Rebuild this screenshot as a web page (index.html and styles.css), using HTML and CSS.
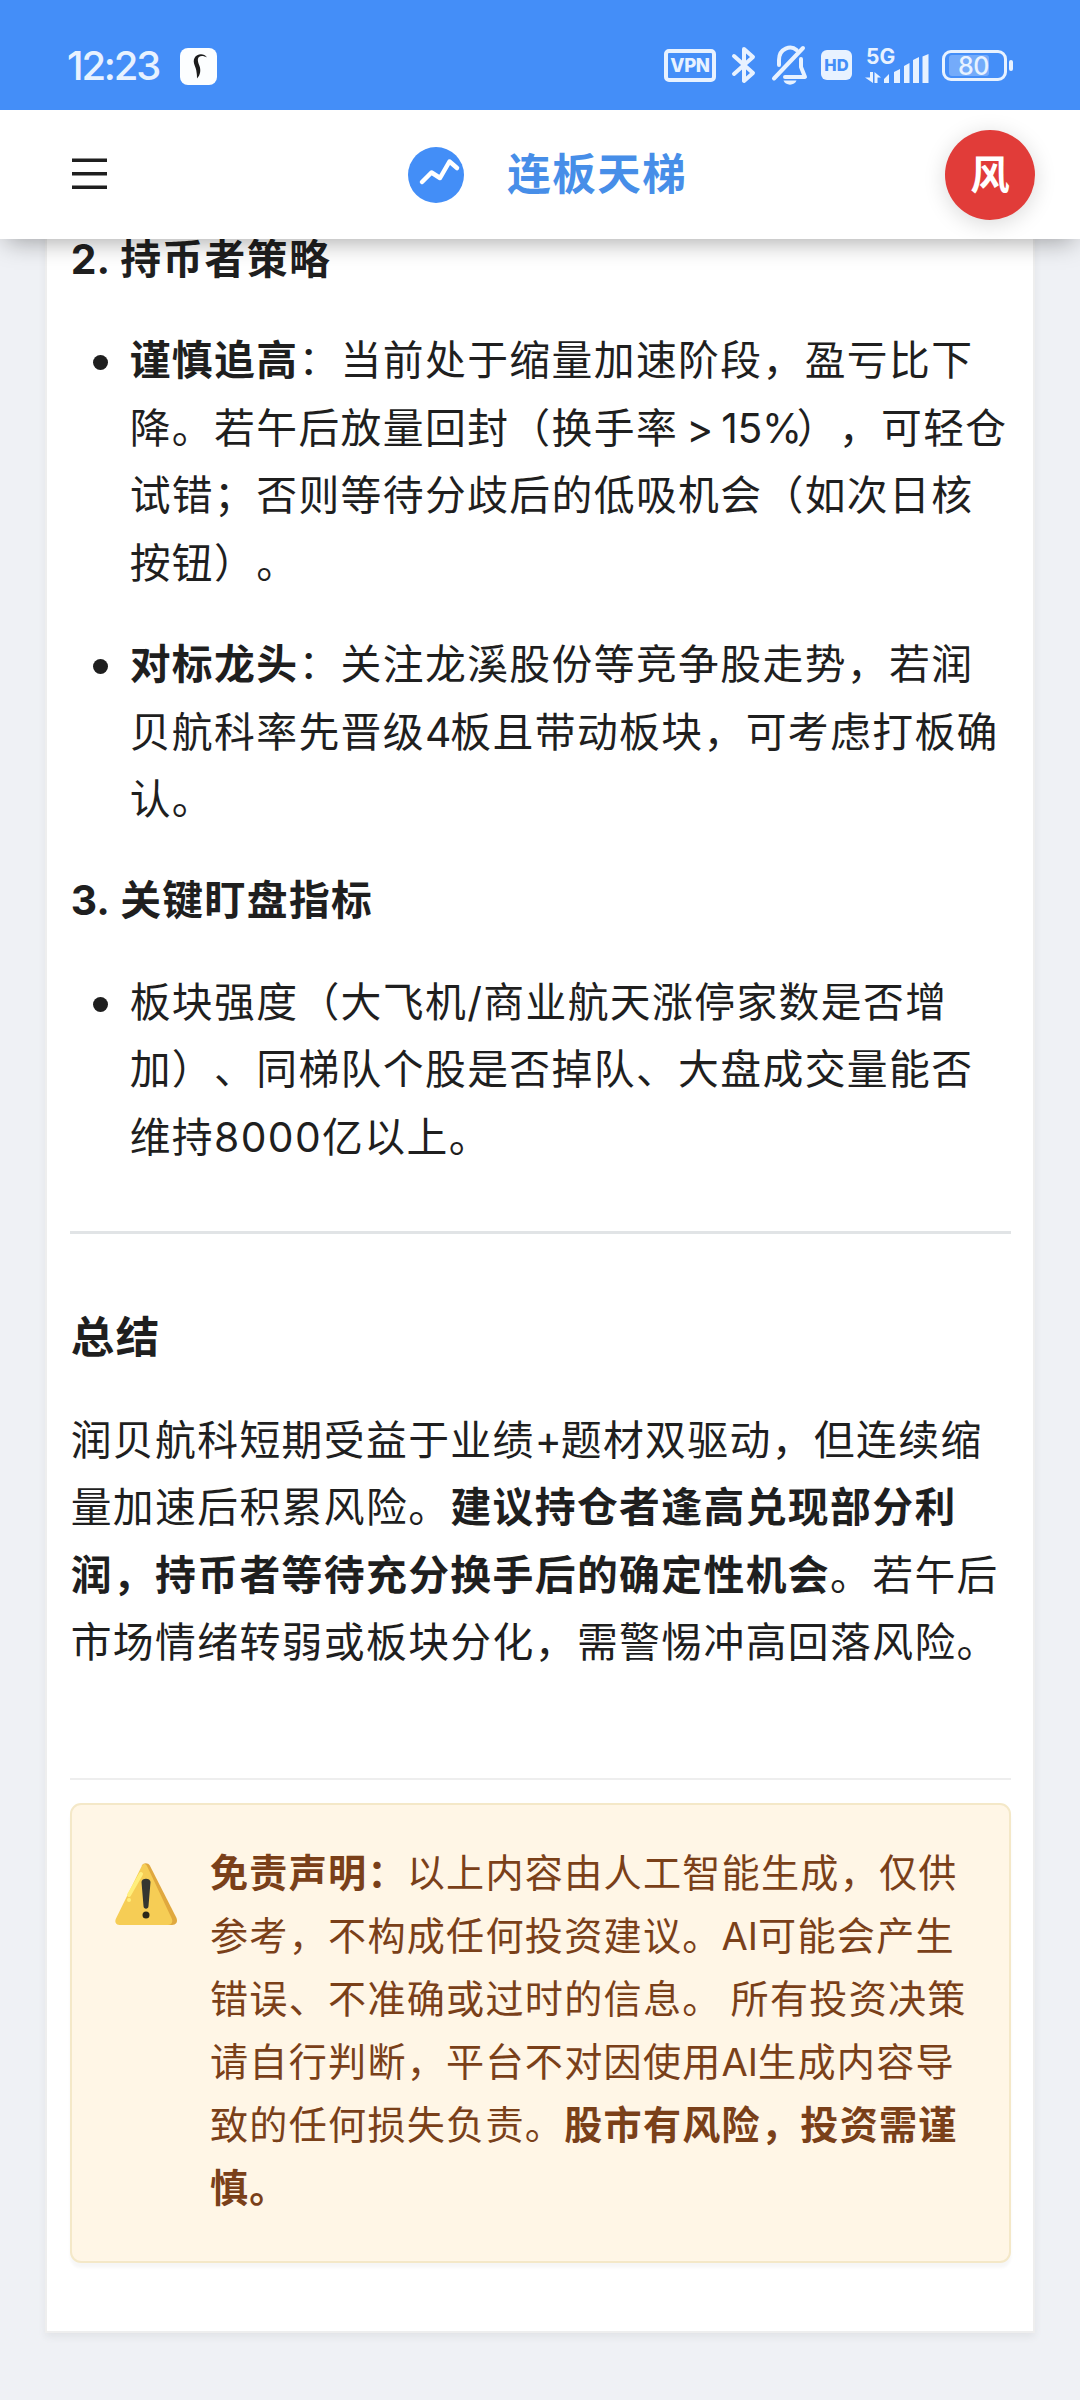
FILE: index.html
```html
<!DOCTYPE html>
<html lang="zh-CN">
<head>
<meta charset="utf-8">
<title>连板天梯</title>
<link rel="stylesheet" href="styles.css">
</head>
<body>
<div class="screen">
  <div class="status">
    <div class="status-left">
      <span class="clock">12:23</span>
      <svg class="app-badge" width="37" height="37" viewBox="0 0 37 37"><rect width="37" height="37" rx="8" fill="#fcfeff"/><path d="M27 9.500C24 5 17 5.500 14.500 10C12 15 16.500 19 16.500 24C17 27 17 29 17 30.500C20.500 27 21 22 19.500 18C18 14 17 11 19 9C21 7.500 24 8 27 9.500Z" fill="#1c1c1c"/></svg>
    </div>
    <div class="status-right">
      <span class="vpn">VPN</span>
      <svg class="bt" width="26" height="40" viewBox="0 0 26 40"><path d="M3 11L22 28L13 36V4L22 12L3 29" fill="none" stroke="#e8f2ff" stroke-width="4" stroke-linejoin="round" stroke-linecap="round"/></svg>
      <svg class="bell" width="38" height="42" viewBox="0 0 38 42"><g fill="none" stroke="#e8f2ff" stroke-width="4" stroke-linecap="round" stroke-linejoin="round"><path d="M3 34.500L32 4"/><path d="M8 21V16C8 4 20 1 25.500 6"/><path d="M30 15V23L34 33H14"/></g><path d="M12.500 36.500H25.500C24 42 14 42 12.500 36.500Z" fill="#e8f2ff"/></svg>
      <span class="hd">HD</span>
      <div class="net">
        <span class="net-label">5G</span>
        <svg class="bars" width="64" height="30" viewBox="0 0 64 30"><g fill="#e8f2ff"><path d="M19 25L24 20V29H19ZM29 18L35 15V29H29ZM39 12L44.500 9V29H39ZM48 6L54 3V29H48ZM57.500 2.500L63.500 0V29H57.500Z"/><path d="M5 18H8V29L0 23.500H5ZM9.500 18L16 23.500H12.500V29H9.500Z"/></g></svg>
      </div>
      <div class="battery"><div class="battery-shell"><span>80</span></div><i></i></div>
    </div>
  </div>

  <header class="nav">
    <svg class="menu" width="35" height="32" viewBox="0 0 35 32"><path d="M0 2.200H35M0 15.700H35M0 29.200H35" stroke="#1f1f1f" stroke-width="3.600"/></svg>
    <div class="brand">
      <svg width="56" height="56" viewBox="0 0 56 56"><circle cx="28" cy="28" r="28" fill="#438ef7"/><path d="M14 35L23.500 25.500L32 31L41.500 14.500L49 21" fill="none" stroke="#fff" stroke-width="4.500" stroke-linecap="round" stroke-linejoin="round"/></svg>
      <span>连板天梯</span>
    </div>
    <div class="avatar">风</div>
  </header>

  <main class="card">
    <h4><span class="num">2. </span>持币者策略</h4>
    <ul>
      <li><p><b>谨慎追高</b>：当前处于缩量加速阶段，盈亏比下<br>降。若午后放量回封（换手率<span class="cmp"> &gt; 15%</span>），可轻仓<br>试错；否则等待分歧后的低吸机会（如次日核<br>按钮）。</p></li>
      <li><p><b>对标龙头</b>：关注龙溪股份等竞争股走势，若润<br>贝航科率先晋级<span class="tight">4</span>板且带动板块，可考虑打板确<br>认。</p></li>
    </ul>
    <h4><span class="num">3. </span>关键盯盘指标</h4>
    <ul>
      <li><p>板块强度（大飞机/商业航天涨停家数是否增<br>加）、同梯队个股是否掉队、大盘成交量能否<br>维持8000亿以上。</p></li>
    </ul>
    <hr>
    <h3>总结</h3>
    <p class="summary">润贝航科短期受益于业绩<span class="tight">+</span>题材双驱动，但连续缩<br>量加速后积累风险。<b>建议持仓者逢高兑现部分利<br>润，持币者等待充分换手后的确定性机会</b>。若午后<br>市场情绪转弱或板块分化，需警惕冲高回落风险。</p>
    <div class="footer">
      <div class="notice">
        <svg class="warn" width="64" height="64" viewBox="0 0 64 64"><path d="M28 3.500C29.500.5 34 .5 35.800 3.500L62.500 56C64 60 62 63 58 63H50L28 8Z" fill="#e0a83e"/><path d="M28 3.500C29.500 1.500 31.500 1.500 33 4L57.500 56C59.500 60 57.500 63 54 63H5.500C2 63 .3 60 2 56.500Z" fill="#f6cd55"/><path d="M27 12L15 33" stroke="#ffee7c" stroke-width="4" stroke-linecap="round"/><circle cx="15" cy="38" r="2" fill="#ffee7c"/><path d="M27.500 20C27.500 15.500 36.500 15.500 36.500 20L34.500 44C34.500 47.500 29.500 47.500 29.500 44Z" fill="#343631"/><circle cx="32" cy="53" r="3.500" fill="#2b2819"/></svg>
        <p><b>免责声明：</b>以上内容由人工智能生成，仅供<br>参考，不构成任何投资建议。<span class="ai">AI</span>可能会产生<br>错误、不准确或过时的信息。 所有投资决策<br>请自行判断，平台不对因使用<span class="ai">AI</span>生成内容导<br>致的任何损失负责。<b>股市有风险，投资需谨<br>慎。</b></p>
      </div>
    </div>
  </main>
</div>
</body>
</html>
```
FILE: styles.css
```css
* { box-sizing: border-box; margin: 0; padding: 0; }
body {
  background: #eff1f5;
  color: #1f1f1f;
  font-family: Inter, "Noto Sans CJK SC", sans-serif;
  font-size: 40.8px;
  line-height: 67.5px;
  text-spacing-trim: space-all;
  white-space: nowrap;
}
.screen { width: 1080px; height: 2400px; overflow: hidden; }
b, h3, h4 { font-weight: 700; }

.status {
  position: relative;
  z-index: 3;
  height: 110px;
  padding: 20px 67px 0 67px;
  background: #448ef8;
  display: flex;
  align-items: center;
  justify-content: space-between;
  color: #e8f2ff;
}
.status-left, .status-right { display: flex; align-items: center; }
.status-left { gap: 20px; }
.clock { width: 93px; font-size: 40px; font-weight: 500; letter-spacing: -2.2px; line-height: 40px; padding-top: 1px; }
.app-badge { margin-top: 3px; }
.vpn {
  width: 52px; height: 33px;
  margin-right: 15px;
  border: 4px solid #e8f2ff; border-radius: 5px;
  font-size: 18.5px; font-weight: 800; line-height: 25px; text-align: center;
  letter-spacing: -.4px;
}
.bt { margin-right: 14px; }
.bell { margin-right: 12px; }
.hd {
  width: 31px; height: 30px;
  margin-right: 13px;
  border-radius: 6px;
  background: #e8f2ff; color: #448ef8;
  font-size: 16.5px; font-weight: 800; line-height: 30px; text-align: center;
}
.net { display: grid; width: 64px; margin-right: 13px; }
.net > * { grid-area: 1 / 1; }
.net-label { align-self: start; font-size: 21px; font-weight: 700; line-height: 22px; padding-left: 1px; margin-top: -1px; }
.bars { margin-top: 7px; }
.battery { display: flex; align-items: center; gap: 2px; }
.battery-shell {
  width: 65px; height: 31px; padding: 2px 4px;
  border: 3px solid #e8f2ff; border-radius: 9px;
}
.battery-shell span {
  display: block; width: 40px; height: 21px;
  background: #74abfa; border-radius: 3px;
  font-size: 25px; font-weight: 500; line-height: 22px; text-indent: 9px; letter-spacing: -.6px;
}
.battery i { width: 4px; height: 11px; border-radius: 2px; background: #e8f2ff; }

.nav {
  position: relative;
  z-index: 2;
  height: 129px;
  padding: 0 45px 0 72px;
  background: #fff;
  box-shadow: 0 8px 24px -6px rgba(0, 0, 0, .36);
  display: flex;
  align-items: center;
  justify-content: space-between;
}
.menu { margin-top: -2px; }
.brand {
  display: flex; align-items: center; gap: 43.7px; margin-left: 43px;
  color: #478ee8; font-size: 43.5px; font-weight: 700; letter-spacing: 1.5px;
}
.avatar {
  width: 90px; height: 90px;
  border-radius: 50%;
  background: #e13c39; color: #fff;
  box-shadow: 0 4px 22px rgba(0, 0, 0, .15);
  font-size: 39.4px; font-weight: 700; line-height: 90px; text-align: center;
}

.card {
  width: 990px;
  height: 2107px;
  margin: -13px auto 0;
  padding: 0 22px 0 23px;
  background: #fff;
  border: 2px solid #eee;
  border-top: 0;
  box-shadow: 0 4px 8px rgba(0, 0, 0, .06);
  letter-spacing: 1.39px;
}
h4 { font-size: 40.8px; line-height: 67.5px; }
h3, h4, .summary { padding-left: .7px; }
.num { display: inline-block; width: 49.5px; white-space: pre; letter-spacing: 0; }
.cmp { display: inline-block; width: 118.5px; white-space: pre; word-spacing: -3px; letter-spacing: -.3px; }
.tight { letter-spacing: -1px; }
ul { list-style: none; margin: 33.75px 0; padding-left: 23px; }
li { display: flex; gap: 21.7px; }
li + li { margin-top: 33.75px; }
li::before { content: ""; flex: none; width: 15px; height: 15px; margin-top: 28px; border-radius: 50%; background: #1f1f1f; }
hr { height: 3px; margin: 60px 0 67px; border: 0; background: #e1e4e6; }
h3 { font-size: 43.5px; line-height: 72px; letter-spacing: 1.5px; }
.summary { margin-top: 33.5px; }
.footer { margin-top: 101.5px; padding-top: 23px; border-top: 2px solid #eee; }
.notice {
  height: 460px;
  padding: 37px 42px;
  display: flex;
  align-items: flex-start;
  gap: 32px;
  background: #fff6e6;
  border: 2px solid #f4e8c8;
  border-radius: 11px;
  box-shadow: 0 5px 3px rgba(0, 0, 0, .035);
  color: #7a4019;
  font-size: 38.1px;
  line-height: 63px;
  letter-spacing: 1.275px;
  word-spacing: -3px;
}
.ai { letter-spacing: 0; }
.warn { flex: none; margin-top: 20px; }
```
